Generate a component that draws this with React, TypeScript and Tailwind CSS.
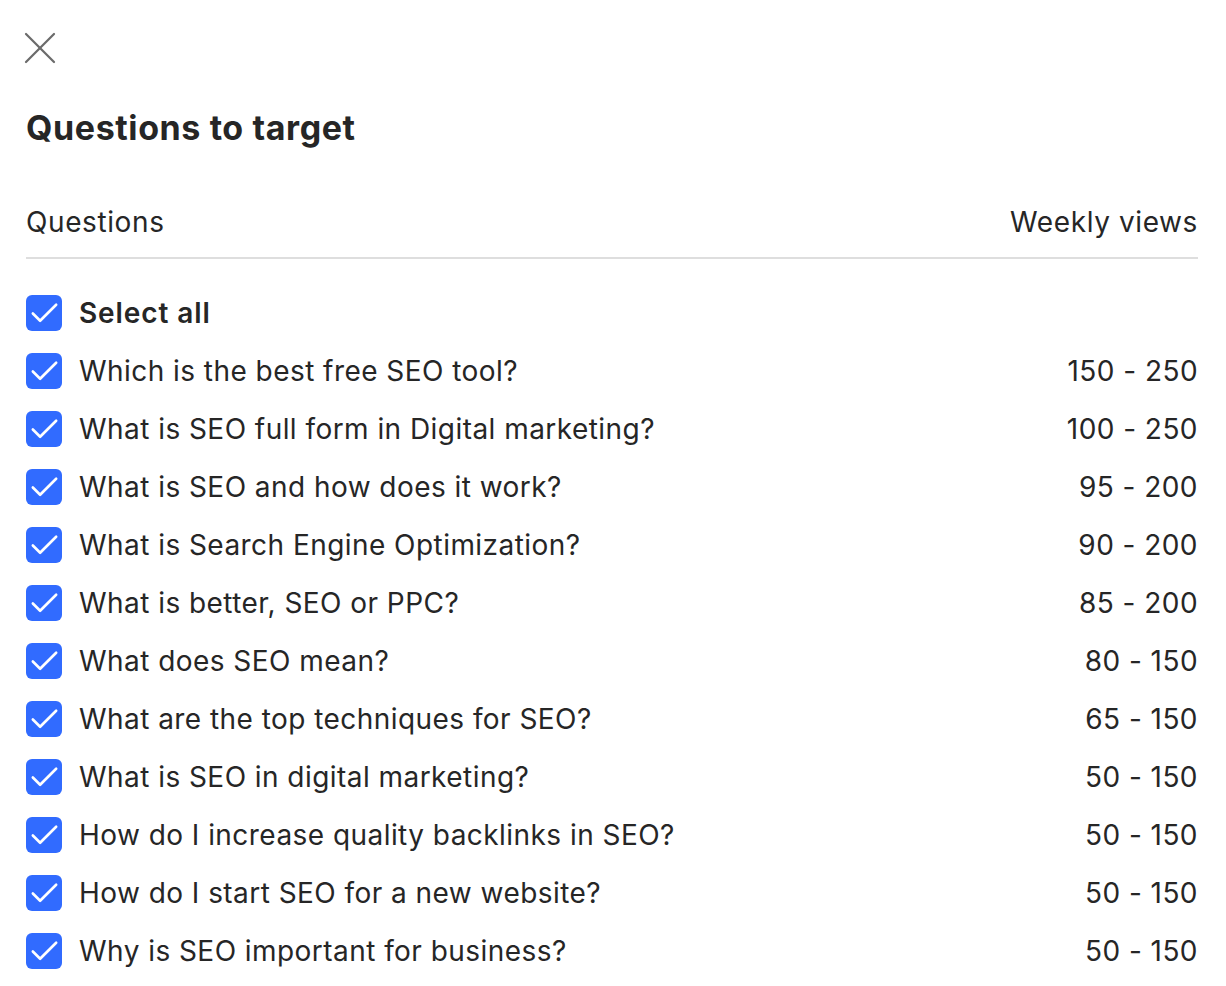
import { X, Check } from 'lucide-react';

const questions = [
  { q: 'Which is the best free SEO tool?', v: '150 - 250' },
  { q: 'What is SEO full form in Digital marketing?', v: '100 - 250' },
  { q: 'What is SEO and how does it work?', v: '95 - 200' },
  { q: 'What is Search Engine Optimization?', v: '90 - 200' },
  { q: 'What is better, SEO or PPC?', v: '85 - 200' },
  { q: 'What does SEO mean?', v: '80 - 150' },
  { q: 'What are the top techniques for SEO?', v: '65 - 150' },
  { q: 'What is SEO in digital marketing?', v: '50 - 150' },
  { q: 'How do I increase quality backlinks in SEO?', v: '50 - 150' },
  { q: 'How do I start SEO for a new website?', v: '50 - 150' },
  { q: 'Why is SEO important for business?', v: '50 - 150' },
];

const Box = () => (
  <span className="flex h-[36px] w-[36px] shrink-0 items-center justify-center rounded-[6px] bg-[#316bff]">
    <Check size={35} strokeWidth={1.8} className="text-white" />
  </span>
);

const App = () => {
  return (
    <div
      className="min-h-screen bg-white pl-[26px] pr-[28px] pt-[30px] text-[#262626]"
      style={{ fontFamily: 'Inter, "Noto Sans", sans-serif' }}
    >
      <button className="-ml-[14px] -my-[10px] flex h-[56px] w-[56px] items-center justify-center text-[#6b6b6b]">
        <X size={56} strokeWidth={0.95} />
      </button>

      <h1 className="mt-[42px] text-[34px] font-bold leading-[40px] tracking-[0.6px]">Questions to target</h1>

      <div className="mt-[57px] flex items-center justify-between pb-[18px] text-[28px] leading-[34px] tracking-[0.6px]">
        <span>Questions</span>
        <span>Weekly views</span>
      </div>
      <div className="h-[2px] bg-[#dedede]" />

      <div className="mt-[36px] flex h-[36px] items-center gap-[17px]">
        <Box />
        <span className="text-[28px] font-semibold leading-[34px] tracking-[0.9px]">Select all</span>
      </div>

      <ul className="mt-[22px] flex flex-col gap-[22px]">
        {questions.map((item) => (
          <li key={item.q} className="flex h-[36px] items-center text-[28px] leading-[34px] tracking-[0.45px]">
            <Box />
            <span className="ml-[17px] flex-1">{item.q}</span>
            <span>{item.v}</span>
          </li>
        ))}
      </ul>
    </div>
  );
};

export default App;
